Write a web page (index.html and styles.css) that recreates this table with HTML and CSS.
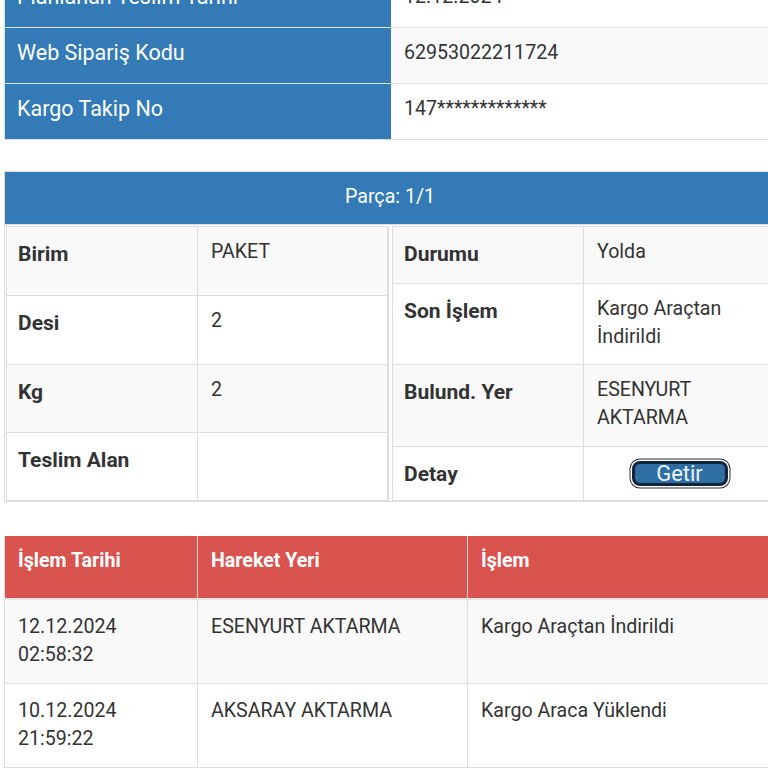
FILE: index.html
```html
<!DOCTYPE html>
<html lang="tr">
<head>
<meta charset="utf-8">
<title>Kargo Takip</title>
<link rel="stylesheet" href="styles.css">
</head>
<body>
<div class="page">
  <div class="info">
    <div class="info-label">Planlanan Teslim Tarihi</div>
    <div class="info-value">12.12.2024</div>
    <div class="info-label">Web Sipariş Kodu</div>
    <div class="info-value stripe">62953022211724</div>
    <div class="info-label">Kargo Takip No</div>
    <div class="info-value">147*************</div>
  </div>

  <div class="parts">
    <div class="parts-head">Parça: 1/1</div>
    <div class="parts-body">
      <div class="sub sub-left">
        <div class="k stripe">Birim</div><div class="v stripe">PAKET</div>
        <div class="k">Desi</div><div class="v">2</div>
        <div class="k stripe">Kg</div><div class="v stripe">2</div>
        <div class="k">Teslim Alan</div><div class="v"></div>
      </div>
      <div class="sub sub-right">
        <div class="k stripe">Durumu</div><div class="v stripe">Yolda</div>
        <div class="k">Son İşlem</div><div class="v">Kargo Araçtan İndirildi</div>
        <div class="k stripe">Bulund. Yer</div><div class="v stripe">ESENYURT AKTARMA</div>
        <div class="k">Detay</div><div class="v v-btn"><button class="getir" type="button">Getir</button></div>
      </div>
    </div>
  </div>

  <div class="moves">
    <div class="mh">İşlem Tarihi</div>
    <div class="mh">Hareket Yeri</div>
    <div class="mh">İşlem</div>

    <div class="mc stripe">12.12.2024<br>02:58:32</div>
    <div class="mc stripe">ESENYURT AKTARMA</div>
    <div class="mc stripe">Kargo Araçtan İndirildi</div>

    <div class="mc">10.12.2024<br>21:59:22</div>
    <div class="mc">AKSARAY AKTARMA</div>
    <div class="mc">Kargo Araca Yüklendi</div>

    <div class="mc stripe">10.12.2024<br>18:12:40</div>
    <div class="mc stripe">AKSARAY AKTARMA</div>
    <div class="mc stripe">Kargo Teslim Alındı</div>
  </div>
</div>
</body>
</html>
```

FILE: styles.css
```css
* { box-sizing: border-box; }

html, body {
  margin: 0;
  padding: 0;
  background: #fff;
  overflow: hidden;
}

body {
  font-family: Roboto, "Liberation Sans", sans-serif;
  color: #333;
  font-size: 19.6px;
  line-height: 28px;
}

.page {
  width: 772px;
  margin: -29px 0 0 4px;
}

.stripe { background: #f9f9f9; }

/* top info table */
.info {
  display: grid;
  grid-template-columns: 386px 386px;
  border-left: 1px solid #dde6ef;
  border-bottom: 1px solid #ddd;
}

.info-label,
.info-value {
  height: 56px;
  padding: 11px 13px;
  border-top: 1px solid #ddd;
}

.info-label {
  background: #337ab7;
  color: #fff;
  font-size: 21.5px;
  padding-left: 12px;
  border-top-color: #d9e6f2;
}

.info-value {
  background: #fff;
}
.info-value.stripe { background: #f9f9f9; }

/* parts table */
.parts {
  margin-top: 31px;
  border: 1px solid #ddd;
}

.parts-head {
  background: #337ab7;
  color: #fff;
  text-align: center;
  height: 52px;
  padding: 11px;
}

.parts-body {
  display: grid;
  grid-template-columns: 383px 1fr;
  gap: 3px;
  padding: 1px 0 0 1px;
  border-top: 1px solid #ddd;
}

.sub {
  display: grid;
  grid-template-columns: 191px 1fr;
  border: 1.5px solid #ddd;
  border-right-width: 2px;
}

.sub-left { grid-template-rows: repeat(4, 1fr); }
.sub-right { grid-template-rows: 56px 81px 82px 54px; border-right: 0; }

.k, .v {
  border-top: 1px solid #ddd;
  padding: 11px 13px;
  background: #fff;
}
.k.stripe, .v.stripe { background: #f9f9f9; }

.sub > .k:nth-child(1),
.sub > .v:nth-child(2) { border-top: 0; }

.k {
  font-weight: 700;
  font-size: 21px;
  padding: 13px 12px 11px 11px;
  border-right: 1px solid #ddd;
}

.v-btn {
  display: flex;
  align-items: center;
  justify-content: center;
  padding: 0;
}

.getir {
  width: 96px;
  height: 25px;
  border: 3px solid #13233a;
  border-radius: 8px;
  background: #2f6ea5;
  color: #e9f4fc;
  font-family: Roboto, "Liberation Sans", sans-serif;
  font-size: 22px;
  line-height: 18px;
  padding: 0;
  box-shadow: 0 0 0 1.5px #fff, 0 0 0 2.5px #2a2a2a;
}

/* movements table */
.moves {
  margin-top: 34px;
  display: grid;
  grid-template-columns: 193px 270px 1fr;
  border-left: 1px solid #ddd;
}

.mh {
  background: #d9534f;
  color: #fff;
  font-weight: 700;
  height: 64px;
  padding: 11px 13px;
  border-right: 1.5px solid #f0d0cf;
  border-bottom: 2px solid #e6e6e6;
}

.mc {
  background: #fff;
  padding: 13px 13px 12px;
  height: 84px;
  border-right: 1px solid #ddd;
  border-bottom: 1.5px solid #ddd;
}
.mc.stripe { background: #f9f9f9; }
```
